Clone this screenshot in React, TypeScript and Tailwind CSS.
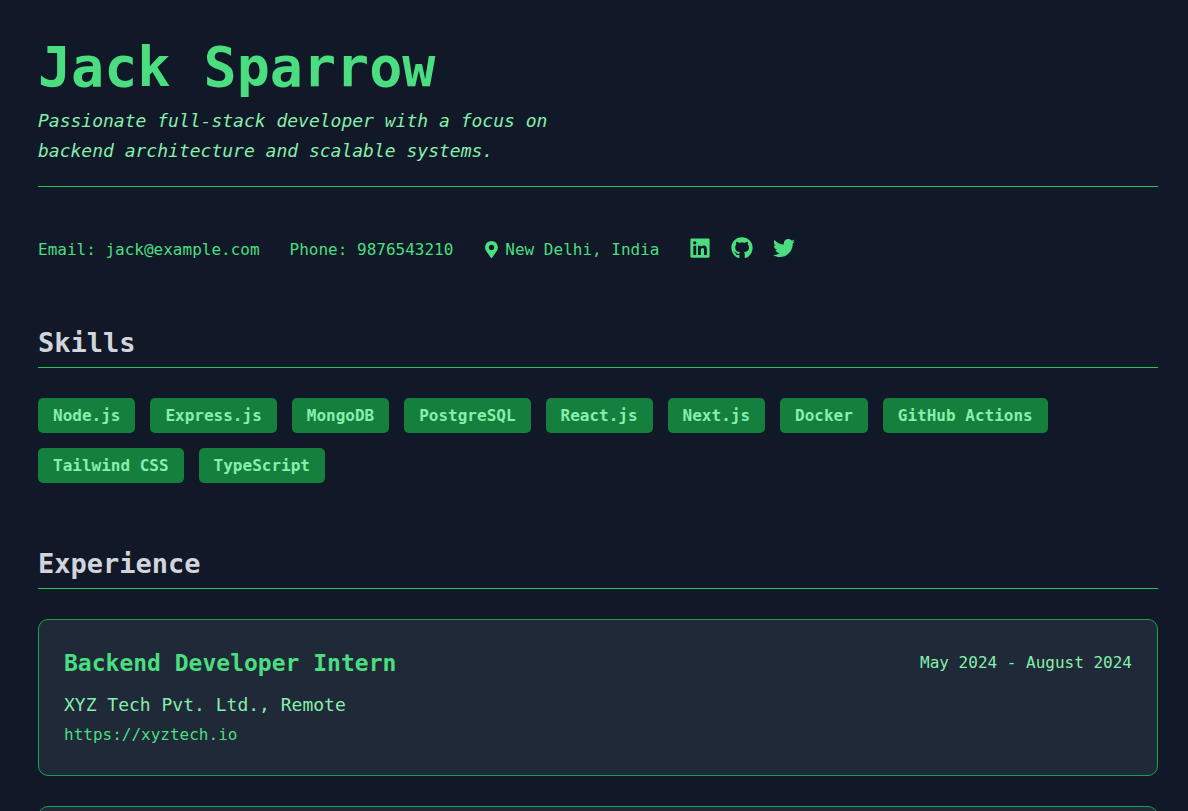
import React from "react";
import { FaGithub, FaLinkedin, FaMapMarkerAlt, FaTwitter } from "react-icons/fa";

const skills = [
  "Node.js",
  "Express.js",
  "MongoDB",
  "PostgreSQL",
  "React.js",
  "Next.js",
  "Docker",
  "GitHub Actions",
  "Tailwind CSS",
  "TypeScript",
];

function SectionTitle({ children }: { children: React.ReactNode }) {
  return (
    <h2 className="mb-[30px] border-b border-[#22c55e] pb-[3px] text-[27px] leading-[42px] font-bold text-[#d1d5db]">
      {children}
    </h2>
  );
}

function Card({ children }: { children?: React.ReactNode }) {
  return (
    <article className="min-h-[157px] rounded-[10px] border border-[#16a34a] bg-[#1f2937] p-[25px]">
      {children}
    </article>
  );
}

export default function App() {
  return (
    <div className="h-screen overflow-hidden bg-[#111827] font-['DejaVu_Sans_Mono','Liberation_Mono',monospace] text-base text-[#4ade80]">
      <main className="pt-[37px] pr-[30px] pl-[38px]">
        <header className="border-b border-[#22c55e] pb-5">
          <h1 className="mb-[9px] text-[55px] leading-[60px] font-bold">Jack Sparrow</h1>
          <p className="max-w-[576px] text-lg leading-[30px] text-[#86efac] italic">
            Passionate full-stack developer with a focus on backend architecture and scalable systems.
          </p>
        </header>

        <section aria-label="Contact" className="mt-[50px] flex flex-wrap items-center gap-[30px] leading-[25px]">
          <a href="mailto:jack@example.com">Email: jack@example.com</a>
          <a href="tel:9876543210">Phone: 9876543210</a>
          <span className="flex items-center gap-[5px]">
            <FaMapMarkerAlt className="size-[17px]" />
            New Delhi, India
          </span>
          <nav aria-label="Profiles" className="flex items-center gap-5 pb-[3px]">
            <a href="#linkedin" aria-label="LinkedIn">
              <FaLinkedin className="size-[22px]" />
            </a>
            <a href="#github" aria-label="GitHub">
              <FaGithub className="size-[22px]" />
            </a>
            <a href="#twitter" aria-label="Twitter">
              <FaTwitter className="size-[22px]" />
            </a>
          </nav>
        </section>

        <section className="mt-[60px]">
          <SectionTitle>Skills</SectionTitle>
          <ul className="flex flex-wrap gap-[15px]">
            {skills.map((skill) => (
              <li
                key={skill}
                className="rounded-[5px] bg-[#15803d] px-[15px] py-[5px] leading-[25px] font-bold text-[#86efac]"
              >
                {skill}
              </li>
            ))}
          </ul>
        </section>

        <section className="mt-[60px]">
          <SectionTitle>Experience</SectionTitle>
          <div className="flex flex-col gap-[30px]">
            <Card>
              <div className="mb-2 flex items-start justify-between">
                <h3 className="text-[23px] leading-[37px] font-bold">Backend Developer Intern</h3>
                <span className="leading-[35px] text-[#86efac]">May 2024 - August 2024</span>
              </div>
              <p className="text-lg leading-[30px] text-[#86efac]">XYZ Tech Pvt. Ltd., Remote</p>
              <a href="https://xyztech.io" className="block leading-[30px]">
                https://xyztech.io
              </a>
            </Card>
            <Card />
          </div>
        </section>
      </main>
    </div>
  );
}
